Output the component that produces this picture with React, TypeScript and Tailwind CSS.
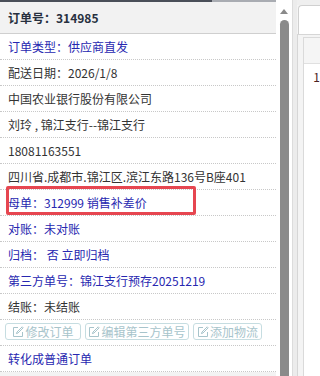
import React from "react";

const font = { fontFamily: '"Noto Sans CJK SC", "Liberation Sans", sans-serif' };

function EditIcon() {
  return (
    <svg width="12" height="12" viewBox="0 0 12 12" fill="none" stroke="currentColor" strokeWidth="1">
      <path d="M6 1.5H1.5v9h9V6" />
      <path d="M10.2 0.8l1 1L6 7l-1.6 0.6L5 6z" />
    </svg>
  );
}

function Row({ children, blue }: { children: React.ReactNode; blue?: boolean }) {
  return (
    <div
      className={`h-[26px] flex items-center pl-2 border-b border-dotted border-[#c8c8c8] text-[12px] whitespace-nowrap ${
        blue ? "text-[#2727b0]" : "text-[#333]"
      }`}
    >
      {children}
    </div>
  );
}

export default function App() {
  return (
    <div className="w-[320px] h-[376px] overflow-hidden flex bg-white" style={font}>
      {/* Order detail panel */}
      <div className="relative w-[276px] flex-shrink-0">
        <div className="flex h-[2px]">
          <div className="w-[212px] bg-[#4a4f59]" />
          <div className="flex-1 bg-[#a9acb2]" />
        </div>
        <div className="h-[32px] bg-[#f2f2f2] border-b border-[#cfcfcf] flex items-center pl-2 text-[12px] font-bold text-[#27303f]">
          订单号：314985
        </div>
        <Row blue>订单类型：供应商直发</Row>
        <Row>配送日期：2026/1/8</Row>
        <Row>中国农业银行股份有限公司</Row>
        <Row>刘玲 , 锦江支行--锦江支行</Row>
        <Row>18081163551</Row>
        <Row>四川省.成都市.锦江区.滨江东路136号B座401</Row>
        <Row blue>母单：312999 销售补差价</Row>
        <Row blue>对账：未对账</Row>
        <Row blue>归档：&nbsp;否 立即归档</Row>
        <Row blue>第三方单号：锦江支行预存20251219</Row>
        <Row>结账：未结账</Row>
        <div className="h-[26px] border-b border-dotted border-[#c8c8c8] flex items-start pt-[3px] pl-[5px] gap-[4px] text-[12px] text-[#a7c4cb]">
          <div className="w-[76px] h-[17px] border border-[#c6dde1] rounded-[3px] flex items-center justify-center gap-[1px]">
            <EditIcon />
            <span>修改订单</span>
          </div>
          <div className="w-[104px] h-[17px] border border-[#c6dde1] rounded-[3px] flex items-center justify-center gap-[1px]">
            <EditIcon />
            <span>编辑第三方单号</span>
          </div>
          <div className="w-[69px] h-[17px] border border-[#c6dde1] rounded-[3px] flex items-center justify-center gap-[1px]">
            <EditIcon />
            <span>添加物流</span>
          </div>
        </div>
        <Row blue>转化成普通订单</Row>
        <div className="h-[4px] bg-[#f3f3f3]" />

        {/* annotation */}
        <div className="absolute left-[6px] top-[186px] w-[190px] h-[29px] border-[3px] border-[#e64650] rounded-[2px]" />
      </div>

      {/* Scrollbar */}
      <div className="w-[16px] flex-shrink-0 flex flex-col items-center bg-white">
        <div className="h-[9px]" />
        <div className="w-0 h-0 border-l-[4px] border-r-[4px] border-b-[5px] border-l-transparent border-r-transparent border-b-[#8a8a8a]" />
        <div className="h-[6px]" />
        <div className="w-[9px] flex-1 bg-[#8a8a8a] rounded-t-[5px]" />
      </div>

      {/* Splitter */}
      <div className="w-[5px] flex-shrink-0 bg-[#ececec] border-l border-[#dcdcdc]" />

      {/* Next panel */}
      <div className="flex-1 flex flex-col bg-[#f4f4f4]">
        <div className="h-[5px] bg-[#efefef]" />
        <div className="h-[29px] ml-[1px] bg-white border-l border-t border-[#d0d0d0] rounded-tl-[4px]" />
        <div className="flex-1 border-l border-t border-[#d6d6d6] pl-[5px] pt-[2px]">
          <div className="h-full border-l border-t border-[#dadada] bg-white">
            <div className="h-[26px] bg-[#f5f5f5] border-b border-[#e0e0e0]" />
            <div className="h-[26px] flex items-center justify-end text-[12px] text-[#4a2222]">1</div>
          </div>
        </div>
      </div>
    </div>
  );
}
